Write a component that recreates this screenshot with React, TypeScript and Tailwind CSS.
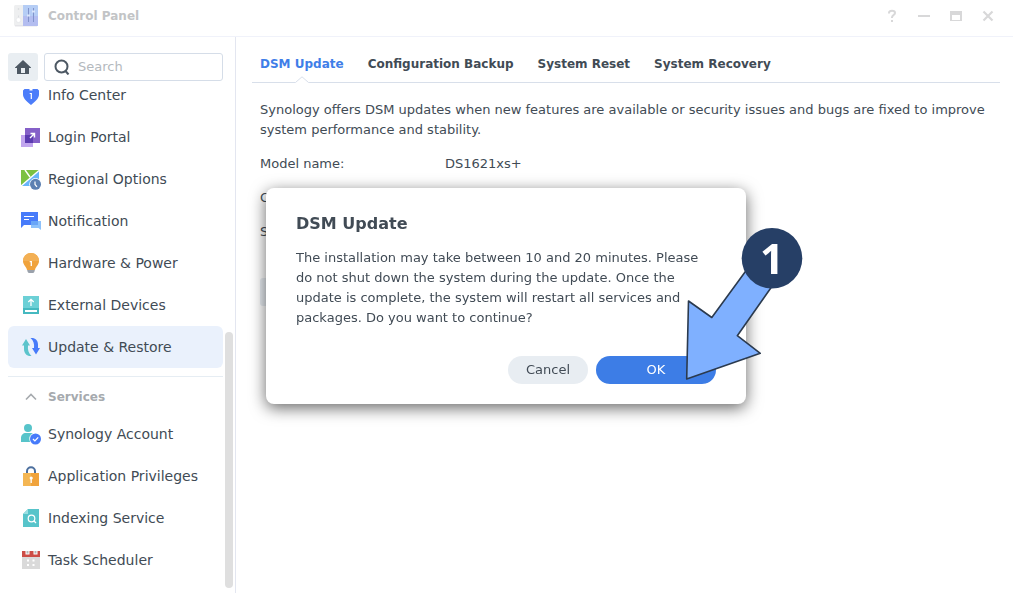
import type { ReactNode } from 'react'

type Item = { label: string; icon: ReactNode; active?: boolean }

const general: Item[] = [
  { label: 'Info Center', icon: <InfoIcon /> },
  { label: 'Login Portal', icon: <PortalIcon /> },
  { label: 'Regional Options', icon: <RegionIcon /> },
  { label: 'Notification', icon: <NotificationIcon /> },
  { label: 'Hardware & Power', icon: <BulbIcon /> },
  { label: 'External Devices', icon: <DeviceIcon /> },
  { label: 'Update & Restore', icon: <UpdateIcon />, active: true },
]

const services: Item[] = [
  { label: 'Synology Account', icon: <AccountIcon /> },
  { label: 'Application Privileges', icon: <LockIcon /> },
  { label: 'Indexing Service', icon: <IndexIcon /> },
  { label: 'Task Scheduler', icon: <CalendarIcon /> },
]

const tabs = ['DSM Update', 'Configuration Backup', 'System Reset', 'System Recovery']

const details = [
  { name: 'Model name:', value: 'DS1621xs+' },
  { name: 'CPU:', value: '' },
  { name: 'S/N:', value: '' },
]

export default function App() {
  return (
    <div className="flex h-screen flex-col overflow-hidden bg-white font-['Verdana','DejaVu_Sans',sans-serif] text-[13px] leading-5 text-[#414b55]">
      <TitleBar />
      <div className="flex min-h-0 flex-1">
        <Sidebar />
        <main className="min-w-0 flex-1 pr-[13px] pl-4">
          <Tabs />
          <div className="px-2 pt-[17px]">
            <p>
              Synology offers DSM updates when new features are available or security issues and bugs are fixed to improve
              system performance and stability.
            </p>
            <dl className="mt-[14px] space-y-[14px]">
              {details.map((row) => (
                <div key={row.name} className="flex">
                  <dt className="w-[185px]">{row.name}</dt>
                  <dd>{row.value}</dd>
                </div>
              ))}
            </dl>
            <button type="button" aria-label="Update Now" className="mt-9 h-7 w-28 rounded-[3px] bg-[#e8edf2]" />
          </div>
        </main>
      </div>
      <UpdateDialog />
    </div>
  )
}

function TitleBar() {
  return (
    <header className="flex h-[37px] shrink-0 items-center border-b border-[#f0f2fa] pr-[17px] pb-[5px] pl-[14px]">
      <svg width="24" height="22" viewBox="0 0 24 22">
        <rect width="10" height="21" rx="1.5" fill="#eeeff0" />
        <path d="M1 20h22v1.5H1z" fill="#e4e4e8" />
        <path d="M9 0h14a1 1 0 0 1 1 1v19a1 1 0 0 1-1 1H9z" fill="#b5cdf5" />
        <path d="M9 11h15v9a1 1 0 0 1-1 1H9z" fill="#b3bdf0" />
        <circle cx="4.5" cy="4" r=".8" fill="#d5d7da" />
        <path d="M4.500 10.500v3" stroke="#dcdee2" />
        <circle cx="4.500" cy="15" r="2.400" fill="#fff" stroke="#dddfe3" strokeWidth=".5" />
        <path d="M14.500 3v14M19.500 3v14" stroke="#8294cb" strokeWidth="1" />
        <path d="M13 10.500h3M18 6.500h3" stroke="#d9e5fb" strokeWidth="2" />
      </svg>
      <h1 className="ml-[10px] flex-1 text-xs font-bold text-[#c2c4c6]">Control Panel</h1>
      <div className="flex gap-4 text-[#d8d8d9]">
        <button type="button" aria-label="Help">
          <svg width="16" height="16" viewBox="0 0 16 16" fill="none" stroke="currentColor" strokeWidth="2">
            <path d="M5 5.500V5c0-1.500 1-2.200 3-2.200s3 .8 3 2.200c0 2-3 2.200-3 4.500v.5M8 12v2" />
          </svg>
        </button>
        <button type="button" aria-label="Minimize">
          <svg width="16" height="16" viewBox="0 0 16 16" fill="currentColor">
            <path d="M2 7h12v2H2z" />
          </svg>
        </button>
        <button type="button" aria-label="Maximize">
          <svg width="16" height="16" viewBox="0 0 16 16" fill="currentColor" fillRule="evenodd">
            <path d="M2 3h12v10H2zM4 7v5h8V7z" />
          </svg>
        </button>
        <button type="button" aria-label="Close">
          <svg width="16" height="16" viewBox="0 0 16 16" fill="none" stroke="currentColor" strokeWidth="2.200">
            <path d="M3.500 3.500l9 9M12.500 3.500l-9 9" />
          </svg>
        </button>
      </div>
    </header>
  )
}

function Sidebar() {
  return (
    <aside className="flex w-[236px] shrink-0 flex-col border-r border-[#e3e6f0] pl-2">
      <div className="mt-4 mr-3 flex shrink-0 gap-[6px]">
        <button
          type="button"
          aria-label="Home"
          className="flex h-7 w-[30px] items-center justify-center rounded-[3px] bg-[#e9eef2] text-[#4d5863]"
        >
          <svg width="16" height="14" viewBox="0 0 16 14" fill="currentColor" fillRule="evenodd">
            <path d="M8 0L0 7.500V8h2v6h12V8h2v-.5zM6 8h4v5H6z" />
          </svg>
        </button>
        <div className="flex h-7 min-w-0 flex-1 items-center gap-2 rounded-[3px] border border-[#d5dde8] px-[9px]">
          <svg width="16" height="16" viewBox="0 0 16 16" fill="none" stroke="#4d5863" strokeWidth="2" className="shrink-0">
            <circle cx="7.500" cy="7.500" r="6" />
            <path d="M11.500 12l3 3.500" />
          </svg>
          <input
            type="search"
            aria-label="Search"
            placeholder="Search"
            className="w-full min-w-0 bg-transparent outline-none placeholder:text-[#b4b9be]"
          />
        </div>
      </div>
      <div className="flex min-h-0 flex-1 gap-[2px] pr-[2px]">
        <nav className="-mt-[7px] flex-1 text-sm">
          <ItemList items={general} />
          <hr className="mt-2 border-[#e6edf3]" />
          <button type="button" className="flex h-9 w-full items-center pt-1 pl-4 text-xs font-bold text-[#a6aaae]">
            <svg width="14" height="8" viewBox="0 0 14 8" fill="none" stroke="currentColor" strokeWidth="1.600">
              <path d="M2 6.500L7 1.500l5 5" />
            </svg>
            <span className="ml-[10px]">Services</span>
          </button>
          <ItemList items={services} />
        </nav>
        <div className="mb-[5px] h-1/2 w-2 self-end rounded-full bg-[#dfdfdf]" />
      </div>
    </aside>
  )
}

function ItemList({ items }: { items: Item[] }) {
  return (
    <ul>
      {items.map((item) => (
        <li key={item.label}>
          <a
            href="#"
            className={
              item.active
                ? 'flex h-[42px] items-center gap-[6px] rounded-md bg-[#eaf1fc] pl-3'
                : 'flex h-[42px] items-center gap-[6px] rounded-md pl-3'
            }
          >
            <svg width="22" height="22" viewBox="0 0 22 22" className="shrink-0">
              {item.icon}
            </svg>
            {item.label}
          </a>
        </li>
      ))}
    </ul>
  )
}

function Tabs() {
  return (
    <div role="tablist" className="flex h-[46px] items-end gap-6 border-b border-[#d8dfea] px-2 text-xs font-bold">
      {tabs.map((tab, i) => (
        <button
          key={tab}
          type="button"
          role="tab"
          aria-selected={i === 0}
          className={i === 0 ? 'relative h-7 pb-2 text-[#3f7ee8]' : 'h-7 pb-2'}
        >
          {tab}
          {i === 0 && (
            <svg width="14" height="7" viewBox="0 0 14 7" className="absolute -bottom-px left-1/2 -translate-x-1/2">
              <path d="M0 7L7 .5 14 7z" fill="#fff" />
              <path d="M.5 6.500L7 .8l6.500 5.700" fill="none" stroke="#d8dfea" />
            </svg>
          )}
        </button>
      ))}
    </div>
  )
}

function UpdateDialog() {
  return (
    <div className="fixed inset-0 flex items-center justify-center pr-px pb-px">
      <div
        role="dialog"
        aria-labelledby="dialog-title"
        className="relative w-[480px] rounded-lg bg-white px-[30px] pt-6 pb-5 shadow-[0_4px_16px_rgba(0,0,0,0.6)]"
      >
        <h2 id="dialog-title" className="text-base leading-6 font-bold">
          DSM Update
        </h2>
        <p className="mt-3">
          The installation may take between 10 and 20 minutes. Please do not shut down the system during the update. Once
          the update is complete, the system will restart all services and packages. Do you want to continue?
        </p>
        <div className="mt-7 flex justify-end gap-2">
          <button type="button" className="h-7 w-20 rounded-full bg-[#e8edf2]">
            Cancel
          </button>
          <button type="button" className="h-7 w-[120px] rounded-full bg-[#3d7de6] text-white">
            OK
          </button>
        </div>
        <StepMarker />
      </div>
    </div>
  )
}

function StepMarker() {
  return (
    <div className="pointer-events-none absolute top-[38px] -right-[58px]">
      <svg width="120" height="156" viewBox="0 0 120 156">
        <path
          d="M2.700 153L4.500 75l23.300 16.500L64 42l27 14-37.700 53.700 23 17.600z"
          fill="#7fb0ff"
          stroke="#2b3a4e"
          strokeWidth="1.600"
          strokeLinejoin="round"
        />
        <circle cx="88" cy="32.300" r="30.300" fill="#263f66" />
      </svg>
      <span className="absolute top-[2px] left-[58px] w-[60px] text-center font-['Open_Sans',sans-serif] text-[42px] leading-[60px] font-bold text-white">
        1
      </span>
    </div>
  )
}

function InfoIcon() {
  return (
    <>
      <path d="M4.500 5h5v1.500h3V5h5L19 6.500v4c0 4-4 7-8 10.500-4-3.500-8-6.500-8-10.500v-4z" fill="#4c7dfa" />
      <path d="M9.700 9.500h1.600V15" fill="none" stroke="#fff" strokeWidth="1.200" />
    </>
  )
}

function PortalIcon() {
  return (
    <>
      <path d="M1 9h12v12H1z" fill="#c1a5ee" />
      <path d="M5 2h15v15H5z" fill="#8560c8" />
      <path d="M5 9h8v8H5z" fill="#5b3bb0" />
      <path d="M10 12l4-4M10.500 7.500h4v4" fill="none" stroke="#fff" strokeWidth="1.400" />
    </>
  )
}

function RegionIcon() {
  return (
    <>
      <path d="M1 2h18v16H1z" fill="#69b5fa" />
      <path d="M1 2h18L1 18z" fill="#7cc142" />
      <path d="M1 18L19 2.500M5 2l5 7" stroke="#fff" strokeWidth="1.400" />
      <circle cx="15.500" cy="16.300" r="6.200" fill="#fff" />
      <circle cx="15.500" cy="16.300" r="5.500" fill="#5c80b2" />
      <path d="M15 13.500v3l2 2.300" fill="none" stroke="#fff" strokeWidth="1.200" />
    </>
  )
}

function NotificationIcon() {
  return (
    <>
      <path d="M1 2h17v13H4l-3 3z" fill="#477bfa" />
      <path d="M4 6.500h10M4 9.500h5" stroke="#fff" strokeWidth="1.200" />
      <path d="M11 11h10v9l-2.500-2H11z" fill="#8ec2fb" />
      <path d="M11 11h7v4h-7z" fill="#69a5f7" />
    </>
  )
}

function BulbIcon() {
  return (
    <>
      <path d="M7 17.500h8l-.7 2.500-1 1H8.700l-1-1z" fill="#9aa1ab" />
      <path d="M11 1a8 8 0 0 1 8 8c0 4-3.500 5.500-4 9H7c-.5-3.500-4-5-4-9a8 8 0 0 1 8-8z" fill="#f0a33c" />
      <path d="M11 1a8 8 0 0 1 8 8H3a8 8 0 0 1 8-8z" fill="#f3b054" />
      <path d="M9.700 9.600h1.600V14" fill="none" stroke="#fff" strokeWidth="1.300" />
    </>
  )
}

function DeviceIcon() {
  return (
    <>
      <path d="M3 2h16v18H3z" fill="#6cd0d6" />
      <path d="M3 14h16v6H3z" fill="#45b9c0" />
      <path d="M11 12V5.500M8.300 8L11 5.300 13.700 8" fill="none" stroke="#fff" strokeWidth="1.300" />
      <path d="M5 17h12" stroke="#fff" strokeWidth="2" />
    </>
  )
}

function UpdateIcon() {
  return (
    <>
      <path d="M6 3l4 6.500H8c-.5 4 .5 7.500 3.500 10.500C7 20.500 4 17.500 4 13V9.500H2z" fill="#5cc4cc" />
      <path d="M10.500 2c4.500-.5 7.500 2 7.500 6.500V12h2l-4 6.500-4-6.500h2c.5-4-.5-7.500-3.500-10z" fill="#477bfa" />
    </>
  )
}

function AccountIcon() {
  return (
    <>
      <circle cx="8" cy="5" r="4" fill="#57c4ca" />
      <path d="M1 19v-4c0-3 2-5 5-5h4c3 0 5 2 5 5v4z" fill="#57c4ca" />
      <circle cx="15.500" cy="16" r="6.200" fill="#fff" />
      <circle cx="15.500" cy="16" r="5.500" fill="#477bfa" />
      <path d="M13 16l1.900 1.900 3.300-3.500" fill="none" stroke="#fff" strokeWidth="1.300" />
    </>
  )
}

function LockIcon() {
  return (
    <>
      <path d="M7 9V6.200a4 4 0 0 1 8 0V9" fill="none" stroke="#4c6f9e" strokeWidth="2" />
      <path d="M3 8h16v13H3z" fill="#f4b653" />
      <path d="M11 8h8v13h-8z" fill="#f0a33c" />
      <circle cx="11.200" cy="13" r="1.600" fill="#fff" />
      <path d="M11.200 13.500V18" stroke="#fff" strokeWidth="1.300" />
    </>
  )
}

function IndexIcon() {
  return (
    <>
      <path d="M8 2h11v18H3V7z" fill="#57c4ca" />
      <path d="M3 7l5-5v5z" fill="#9adfe2" />
      <circle cx="11.500" cy="11.500" r="3.300" fill="none" stroke="#fff" strokeWidth="1.200" />
      <path d="M14 14l2 2" stroke="#fff" strokeWidth="1.200" />
    </>
  )
}

function CalendarIcon() {
  return (
    <>
      <path d="M2 3h18v17H2z" fill="#dadada" />
      <path d="M2 2h18v6H2z" fill="#cc4d46" />
      <path d="M7.500 1v4.500M15.500 1v4.500" stroke="#fff" strokeWidth="4" />
      <path d="M7.500 2v2.500M15.500 2v2.500" stroke="#b5b5b5" strokeWidth="2" />
      <path d="M7 11.500h2M12.500 11.500h2M7 16h2M12.500 16h2" stroke="#fff" strokeWidth="2" />
    </>
  )
}
